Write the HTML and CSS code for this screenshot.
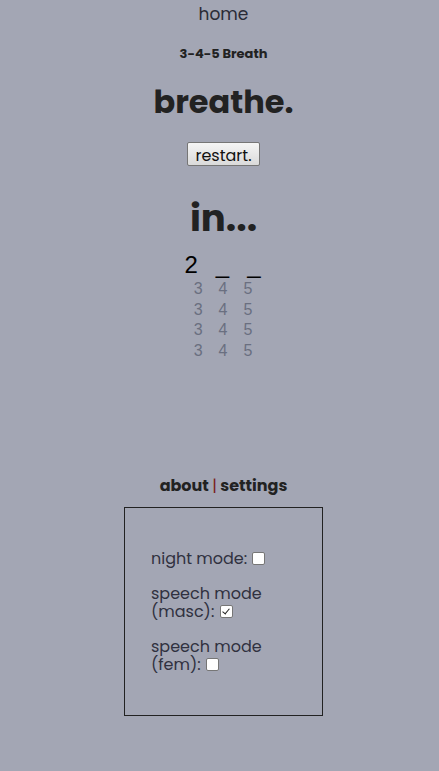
FILE: index.html
```html
<!DOCTYPE html>
<html lang="en">
<head>
<meta charset="utf-8">
<title>3-4-5 Breath</title>
<link rel="stylesheet" href="styles.css">
</head>
<body>
<main class="page">
  <a class="home" href="#">home</a>
  <h3 class="subtitle">3-4-5 Breath</h3>
  <h1 class="title">breathe.</h1>
  <button class="restart" type="button">restart.</button>
  <h2 class="phase">in...</h2>
  <div class="counter">
    <span>2</span><span>_</span><span>_</span>
  </div>
  <div class="rows">
    <div class="row"><span>3</span><span>4</span><span>5</span></div>
    <div class="row"><span>3</span><span>4</span><span>5</span></div>
    <div class="row"><span>3</span><span>4</span><span>5</span></div>
    <div class="row"><span>3</span><span>4</span><span>5</span></div>
  </div>
  <nav class="tabs"><span>about</span> <span class="sep">|</span> <span>settings</span></nav>
  <section class="settings">
    <p class="opt">night mode: <input type="checkbox"></p>
    <p class="opt">speech mode<br>(masc): <input type="checkbox" checked></p>
    <p class="opt">speech mode<br>(fem): <input type="checkbox"></p>
  </section>
</main>
</body>
</html>
```
FILE: styles.css
```css
html, body {
  background: #a3a6b4;
}
body {
  margin: 0 0 0 8px;
  font-family: "Poppins", "Inter", "Noto Sans", sans-serif;
  color: #222;
}
.page {
  display: flex;
  flex-direction: column;
  align-items: center;
}
.home {
  font-size: 17px;
  line-height: 28px;
  color: #2a2b36;
  text-decoration: none;
}
.subtitle {
  margin: 16px 0 0;
  font-size: 13px;
  font-weight: 700;
  line-height: 20px;
  color: #222;
}
.title {
  margin: 18px 0 0;
  font-size: 32px;
  font-weight: 700;
  line-height: 40px;
  color: #222;
}
.restart {
  margin-top: 20px;
  height: 24px;
  padding: 0 7px;
  font-family: inherit;
  font-size: 16px;
  color: #111;
  background: linear-gradient(#f5f5f5, #dadada);
  border: 1px solid #767676;
  border-radius: 2px;
}
.phase {
  margin: 28px 0 0;
  font-size: 37px;
  font-weight: 700;
  line-height: 48px;
  color: #222;
}
.counter {
  margin: 9px 0 0 -2px;
  display: flex;
  gap: 18px;
  font-family: "Liberation Sans", Arial, sans-serif;
  font-size: 24px;
  line-height: 28px;
  color: #000;
}
.rows {
  margin-left: -1px;
  display: flex;
  flex-direction: column;
  font-family: "Liberation Sans", Arial, sans-serif;
  font-size: 16px;
  line-height: 20.67px;
  color: #6a6f80;
}
.row {
  display: flex;
  gap: 16px;
}
.tabs {
  margin-top: 112px;
  font-size: 16px;
  font-weight: 700;
  line-height: 24px;
  color: #222;
}
.sep {
  font-weight: 400;
  color: #7a2020;
}
.settings {
  margin-top: 9px;
  width: 197px;
  box-sizing: content-box;
  border: 1px solid #222;
  padding: 42px 0 42px;
  display: flex;
  flex-direction: column;
  gap: 18px;
}
.opt {
  margin: 0 0 0 26px;
  font-size: 16px;
  line-height: 17.5px;
  color: #30313f;
}
.opt input {
  appearance: none;
  -webkit-appearance: none;
  position: relative;
  box-sizing: border-box;
  width: 13px;
  height: 13px;
  margin: 0 0 0 1px;
  vertical-align: -1px;
  background: #fff;
  border: 1px solid #767676;
  border-radius: 2px;
}
.opt input:checked::after {
  content: "";
  position: absolute;
  left: 3px;
  top: 1px;
  width: 3px;
  height: 6px;
  border: solid #222;
  border-width: 0 1.5px 1.5px 0;
  transform: rotate(40deg);
}
</style>
```
